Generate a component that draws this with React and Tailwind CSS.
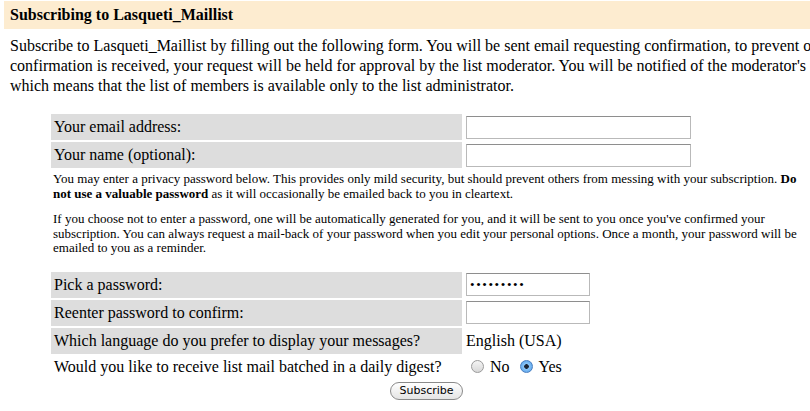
const serif = "font-['Liberation_Serif','Times_New_Roman',serif]";

function Field({ label, children }) {
  return (
    <>
      <div className="h-[26px] bg-[#dddddd] pl-[3px] flex items-center text-[16px]">{label}</div>
      <div className="h-[26px] pl-[2px] flex items-center text-[16px]">{children}</div>
    </>
  );
}

function TextBox({ width, type = "text", defaultValue }) {
  return (
    <input
      type={type}
      defaultValue={defaultValue}
      className={`${width} h-[23px] bg-white border border-[#b9b9b9] border-t-[#8e8e8e] px-[3px] text-[13px] tracking-[1.6px] outline-none`}
    />
  );
}

function Radio({ label, checked }) {
  return (
    <label className="flex items-center gap-[6px]">
      <input
        type="radio"
        name="digest"
        defaultChecked={checked}
        className={
          checked
            ? "appearance-none w-[13px] h-[13px] rounded-full border border-[#4a7fc0] bg-[radial-gradient(circle,#1c2535_0_2px,#8cc6f7_2.6px,#4a98e8_100%)]"
            : "appearance-none w-[13px] h-[13px] rounded-full border border-[#9a9a9a] bg-[linear-gradient(#f4f4f4,#d8d8d8)]"
        }
      />
      <span>{label}</span>
    </label>
  );
}

export default function App() {
  return (
    <div className={`w-[810px] h-[411px] overflow-hidden bg-white text-black ${serif}`}>
      <div className="ml-[4px] mt-[1px] h-[28px] bg-[#fdecd0] pl-[6px] flex items-center">
        <h2 className="text-[16px] font-bold">Subscribing to Lasqueti_Maillist</h2>
      </div>

      <p className="ml-[10px] mt-[7px] text-[16px] leading-[20px] whitespace-nowrap">
        Subscribe to Lasqueti_Maillist by filling out the following form. You will be sent email requesting confirmation, to prevent others from gratuitously subscribing you. Once
        <br />
        confirmation is received, your request will be held for approval by the list moderator. You will be notified of the moderator's decision by email. This is also a private list,
        <br />
        which means that the list of members is available only to the list administrator.
      </p>

      <form className="ml-[51px] mt-[18px] w-[753px]">
        <div className="grid grid-cols-[411px_1fr] gap-[2px]">
          <Field label="Your email address:">
            <TextBox width="w-[225px]" />
          </Field>
          <Field label="Your name (optional):">
            <TextBox width="w-[225px]" />
          </Field>
        </div>

        <div className="pl-[2px] pt-[3px] text-[13px] leading-[15px] whitespace-nowrap">
          <p>
            You may enter a privacy password below. This provides only mild security, but should prevent others from messing with your subscription. <b>Do</b>
            <br />
            <b>not use a valuable password</b> as it will occasionally be emailed back to you in cleartext.
          </p>
          <p className="mt-[11px] leading-[14.5px]">
            If you choose not to enter a password, one will be automatically generated for you, and it will be sent to you once you've confirmed your
            <br />
            subscription. You can always request a mail-back of your password when you edit your personal options. Once a month, your password will be
            <br />
            emailed to you as a reminder.
          </p>
        </div>

        <div className="mt-[16px] grid grid-cols-[411px_1fr] gap-[2px]">
          <Field label="Pick a password:">
            <TextBox width="w-[124px]" type="password" defaultValue="secret123" />
          </Field>
          <Field label="Reenter password to confirm:">
            <TextBox width="w-[124px]" type="password" />
          </Field>
          <Field label="Which language do you prefer to display your messages?">
            <span>English (USA)</span>
          </Field>
          <div className="h-[22px] pl-[3px] flex items-center text-[16px]">
            Would you like to receive list mail batched in a daily digest?
          </div>
          <div className="h-[22px] pl-[7px] flex items-center gap-[10px] text-[16px]">
            <Radio label="No" />
            <Radio label="Yes" checked />
          </div>
        </div>

        <div className="mt-[4px] flex justify-center pr-[2px]">
          <button
            type="submit"
            className="h-[18px] px-[8px] rounded-full border border-[#8a8a8a] bg-[linear-gradient(#ffffff,#e4e4e4)] font-['DejaVu_Sans',sans-serif] text-[11px] leading-[14px] text-black"
          >
            Subscribe
          </button>
        </div>
      </form>
    </div>
  );
}
